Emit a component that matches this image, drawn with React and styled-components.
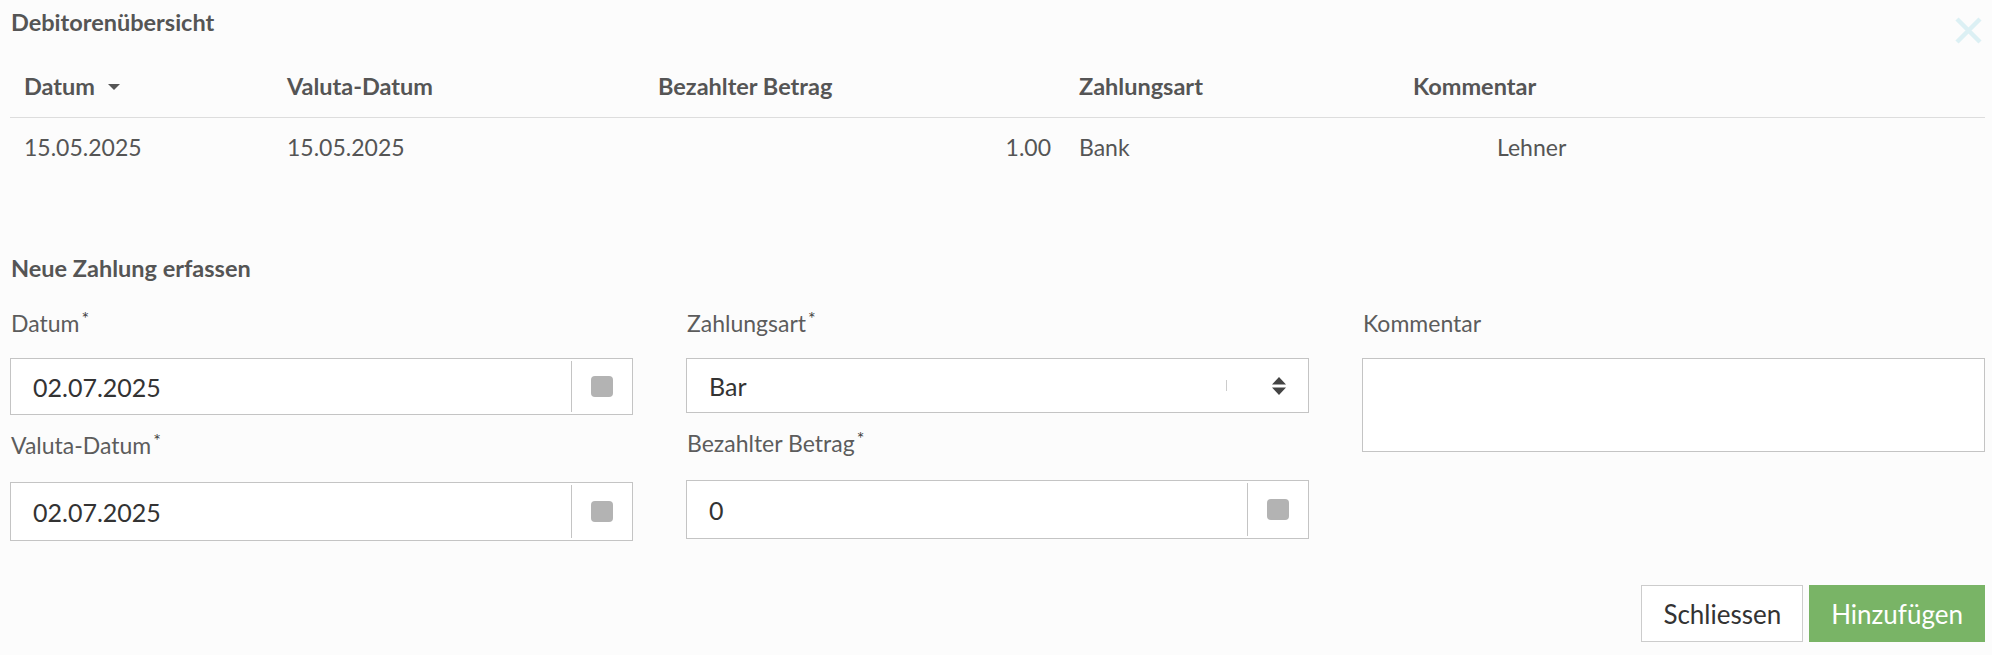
import React from "react";
import styled, { createGlobalStyle } from "styled-components";

const Global = createGlobalStyle`
  html, body { margin: 0; padding: 0; background: #fcfcfc; }
  body { font-family: Lato, "Open Sans", sans-serif; color: #555; }
  * { box-sizing: border-box; }
`;

const Page = styled.div`
  width: 1992px;
  padding: 0 7px 0 10px;
`;

const TitleRow = styled.div`
  display: flex;
  justify-content: space-between;
  align-items: flex-start;
`;

const Title = styled.h1`
  margin: 0;
  font-size: 23.5px;
  font-weight: 700;
  line-height: 44px;
  color: #555;
  padding-left: 1px;
`;

const Close = styled.button`
  margin-top: 16px;
  margin-right: 2px;
  width: 29px;
  height: 29px;
  padding: 0;
  border: 0;
  background: none;
  display: flex;
`;

const Table = styled.div`
  display: grid;
  grid-template-columns: 263px 371px 421px 334px 1fr;
  margin-top: 10px;
`;

const HeadCell = styled.div`
  height: 63px;
  display: flex;
  align-items: center;
  padding: 0 14px;
  font-size: 23.5px;
  font-weight: 700;
  color: #555;
  border-bottom: 1px solid #ddd;
`;

const Cell = styled.div`
  height: 58px;
  display: flex;
  align-items: center;
  justify-content: ${(p) => (p.$right ? "flex-end" : "flex-start")};
  padding: 0 14px;
  padding-left: ${(p) => (p.$indent ? "98px" : "14px")};
  font-size: 23px;
  color: #555;
`;

const Caret = styled.span`
  margin-left: 13px;
  width: 0;
  height: 0;
  border-left: 6px solid transparent;
  border-right: 6px solid transparent;
  border-top: 6px solid #555;
  margin-top: 2px;
`;

const SectionTitle = styled.h2`
  margin: 77px 0 0;
  font-size: 23.5px;
  font-weight: 700;
  line-height: 30px;
  color: #555;
  padding-left: 1px;
`;

const FormGrid = styled.div`
  display: grid;
  grid-template-columns: repeat(3, 1fr);
  column-gap: 53px;
  margin-top: 25px;
`;

const Column = styled.div`
  display: flex;
  flex-direction: column;
`;

const Field = styled.div`
  display: flex;
  flex-direction: column;
  & + & { margin-top: ${(p) => p.$top || 13}px; }
`;

const Label = styled.label`
  display: block;
  height: 30px;
  font-size: 23px;
  line-height: 30px;
  color: #5c5c5c;
  margin-bottom: ${(p) => p.$gap || 20}px;
  padding-left: 1px;
`;

const Star = styled.span`
  display: inline-block;
  font-size: 18px;
  line-height: 0;
  color: #3f3f3f;
  margin-left: 2px;
  vertical-align: top;
  position: relative;
  top: 10px;
`;

const Box = styled.div`
  display: flex;
  height: ${(p) => p.$h || 57}px;
  border: 1px solid #c4c4c4;
  background: #fff;
`;

const Value = styled.div`
  flex: 1;
  display: flex;
  align-items: center;
  padding-left: 22px;
  font-size: 25px;
  color: #333;
`;

const Addon = styled.div`
  width: 61px;
  display: flex;
  align-items: center;
  justify-content: center;
  border-left: 1px solid #c4c4c4;
  margin: 2px 0;
`;

const Square = styled.span`
  width: 22px;
  height: 21px;
  border-radius: 4px;
  background: #b3b3b3;
`;

const SelectSide = styled.div`
  display: flex;
  align-items: center;
  padding-right: 22px;
`;

const Tick = styled.span`
  width: 1px;
  height: 11px;
  background: #ccc;
  margin-right: 45px;
`;

const TextArea = styled.div`
  height: 94px;
  border: 1px solid #c4c4c4;
  background: #fff;
`;

const Footer = styled.div`
  display: flex;
  justify-content: flex-end;
  gap: 6px;
  margin-top: 44px;
`;

const Button = styled.button`
  height: 57px;
  padding: 0 21px;
  font-family: Lato, "Open Sans", sans-serif;
  font-size: 26px;
  border: 1px solid ${(p) => (p.$primary ? "#79b466" : "#ccc")};
  background: ${(p) => (p.$primary ? "#79b466" : "#fff")};
  color: ${(p) => (p.$primary ? "#fff" : "#333")};
`;

const Calendar = () => (
  <Addon>
    <Square />
  </Addon>
);

const Req = () => <Star>*</Star>;

export default function App() {
  return (
    <Page>
      <Global />
      <TitleRow>
        <Title>Debitorenübersicht</Title>
        <Close aria-label="Schliessen">
          <svg width="29" height="29" viewBox="0 0 29 29">
            <path d="M3 3 L26 26 M26 3 L3 26" stroke="#dcf0f4" strokeWidth="4.5" />
          </svg>
        </Close>
      </TitleRow>

      <Table>
        <HeadCell>
          Datum <Caret />
        </HeadCell>
        <HeadCell>Valuta-Datum</HeadCell>
        <HeadCell>Bezahlter Betrag</HeadCell>
        <HeadCell>Zahlungsart</HeadCell>
        <HeadCell>Kommentar</HeadCell>
        <Cell>15.05.2025</Cell>
        <Cell>15.05.2025</Cell>
        <Cell $right>1.00</Cell>
        <Cell>Bank</Cell>
        <Cell $indent>Lehner</Cell>
      </Table>

      <SectionTitle>Neue Zahlung erfassen</SectionTitle>

      <FormGrid>
        <Column>
          <Field>
            <Label>
              Datum
              <Req />
            </Label>
            <Box>
              <Value>02.07.2025</Value>
              <Calendar />
            </Box>
          </Field>
          <Field>
            <Label $gap={22}>
              Valuta-Datum
              <Req />
            </Label>
            <Box $h={59}>
              <Value>02.07.2025</Value>
              <Calendar />
            </Box>
          </Field>
        </Column>
        <Column>
          <Field>
            <Label>
              Zahlungsart
              <Req />
            </Label>
            <Box $h={55}>
              <Value>Bar</Value>
              <SelectSide>
                <Tick />
                <svg width="14" height="18" viewBox="0 0 14 18">
                  <path d="M7 0 L14 7.5 L0 7.5 Z M0 10.5 L14 10.5 L7 18 Z" fill="#444" />
                </svg>
              </SelectSide>
            </Box>
          </Field>
          <Field $top={15}>
            <Label $gap={22}>
              Bezahlter Betrag
              <Req />
            </Label>
            <Box $h={59}>
              <Value>0</Value>
              <Calendar />
            </Box>
          </Field>
        </Column>
        <Column>
          <Field>
            <Label>Kommentar</Label>
            <TextArea />
          </Field>
        </Column>
      </FormGrid>

      <Footer>
        <Button>Schliessen</Button>
        <Button $primary>Hinzufügen</Button>
      </Footer>
    </Page>
  );
}
